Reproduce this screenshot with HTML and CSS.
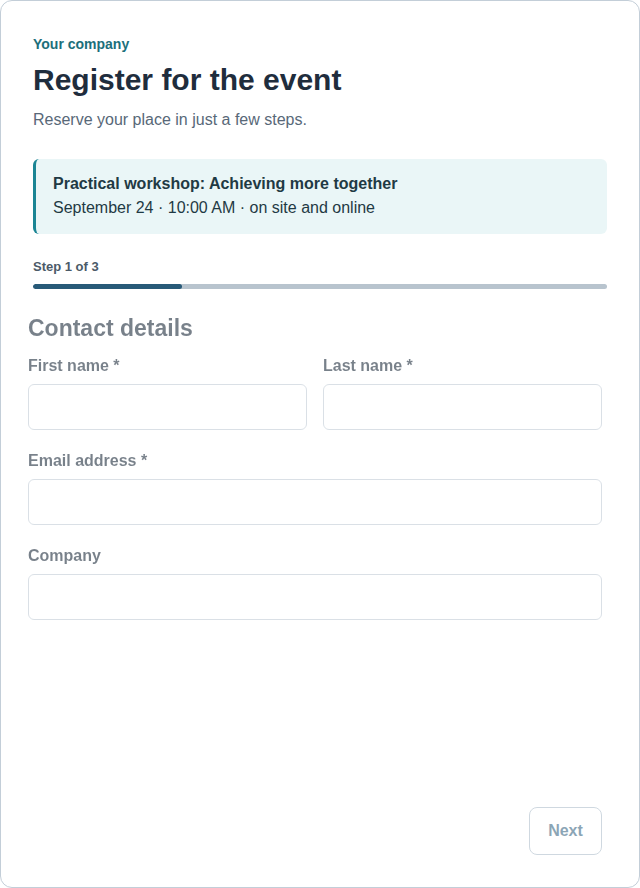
FILE: index.html
```html
<!DOCTYPE html>
<html lang="en">
  <head>
    <meta charset="UTF-8" />
    <title>Register for the event</title>
    <link rel="stylesheet" href="styles.css">
  </head>
  <body>
    <div class="card">
      <header class="card-head">
        <p class="brand">Your company</p>
        <h1>Register for the event</h1>
        <p class="lead">Reserve your place in just a few steps.</p>
      </header>

      <div class="event-box">
        <p class="event-title">Practical workshop: Achieving more together</p>
        <p class="event-meta">September 24 · 10:00 AM · on site and online</p>
      </div>

      <div class="progress">
        <span class="progress-label">Step 1 of 3</span>
        <div class="progress-track">
          <div class="progress-fill" style="width: 26%"></div>
        </div>
      </div>

      <form class="step" onsubmit="return false">
        <h2>Contact details</h2>

        <div class="row">
          <label class="field">
            <span>First name *</span>
            <input type="text" />
          </label>
          <label class="field">
            <span>Last name *</span>
            <input type="text" />
          </label>
        </div>

        <label class="field">
          <span>Email address *</span>
          <input type="email" />
        </label>

        <label class="field">
          <span>Company</span>
          <input type="text" />
        </label>

        <div class="actions">
          <button type="submit" class="next-button">Next</button>
        </div>
      </form>
    </div>
  </body>
</html>
```

FILE: styles.css
```css
* {
  box-sizing: border-box;
}

body {
  font-family: "Liberation Sans", Arial, sans-serif;
  background-color: #ffffff;
  margin: 0;
  padding: 0;
}

.card {
  height: 888px;
  border: 1px solid #c3ced8;
  border-radius: 12px;
  padding: 33px 32px 32px 32px;
  display: flex;
  flex-direction: column;
  background-color: white;
}

.card-head p,
.card-head h1 {
  margin: 0;
}

.brand {
  color: #1c6f7b;
  font-size: 14px;
  font-weight: bold;
  line-height: 20px;
}

.card-head h1 {
  color: #1f2d3d;
  font-size: 30px;
  line-height: 36px;
  margin-top: 8px;
}

.card-head .lead {
  color: #586878;
  font-size: 16px;
  line-height: 22px;
  margin-top: 11px;
}

.event-box {
  margin-top: 28px;
  background-color: #eaf6f7;
  border-left: 3px solid #1b8594;
  border-radius: 6px;
  padding: 13px 18px 14px 17px;
}

.event-box p {
  margin: 0;
  color: #1f3a44;
  font-size: 16px;
  line-height: 24px;
}

.event-title {
  font-weight: bold;
}

.progress {
  margin-top: 25px;
}

.progress-label {
  display: block;
  color: #4b5a68;
  font-size: 13px;
  font-weight: bold;
  line-height: 16px;
}

.progress-track {
  margin-top: 9px;
  height: 5px;
  background-color: #b8c4ce;
  border-radius: 3px;
  overflow: hidden;
}

.progress-fill {
  height: 100%;
  background-color: #285a78;
  border-radius: 3px;
}

/* step is mid slide-in: faded and nudged left */
.step {
  flex: 1;
  display: flex;
  flex-direction: column;
  gap: 21px;
  margin-top: 25px;
  transform: translateX(-5px);
  opacity: 0.6;
}

.step h2 {
  margin: 0 0 -7px 0;
  color: #1f2d3d;
  font-size: 23px;
  line-height: 28px;
}

.row {
  display: flex;
  gap: 16px;
}

.row .field {
  flex: 1;
}

.field {
  display: flex;
  flex-direction: column;
  gap: 8px;
}

.field span {
  color: #1f2d3d;
  font-size: 16px;
  font-weight: bold;
  line-height: 20px;
}

.field input {
  height: 46px;
  border: 1px solid #c2ccd6;
  border-radius: 6px;
  padding: 0 12px;
  font-size: 15px;
  font-family: inherit;
  background-color: white;
}

.actions {
  margin-top: auto;
  display: flex;
  justify-content: flex-end;
}

.next-button {
  width: 73px;
  height: 48px;
  border: 1px solid #b0bfcc;
  border-radius: 8px;
  background-color: white;
  color: #3f6a86;
  font-family: inherit;
  font-size: 16px;
  font-weight: bold;
  cursor: pointer;
}
```
